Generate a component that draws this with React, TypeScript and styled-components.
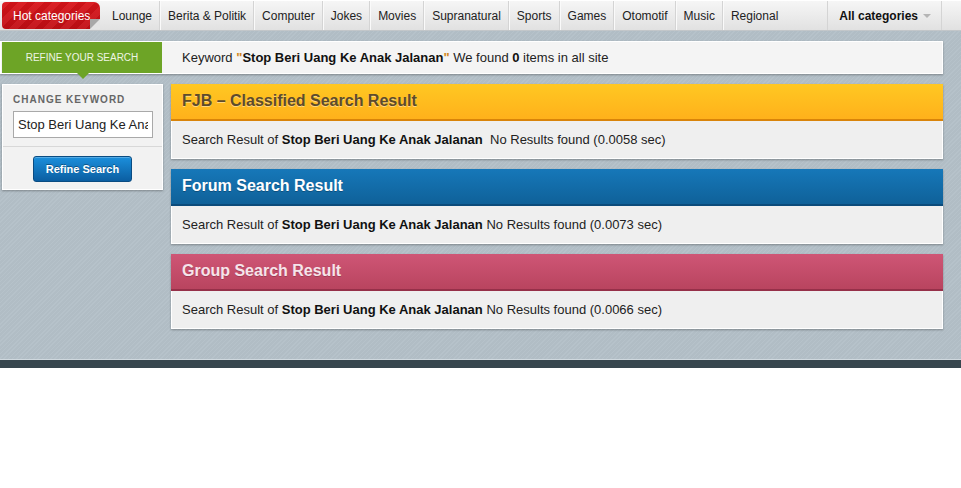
import React from "react"
import styled, { createGlobalStyle } from "styled-components"

const GlobalStyle = createGlobalStyle`
  html, body {
    margin: 0;
    padding: 0;
    background: #ffffff;
    font-family: "Liberation Sans", Arial, sans-serif;
  }
`

const categories = [
  "Lounge",
  "Berita & Politik",
  "Computer",
  "Jokes",
  "Movies",
  "Supranatural",
  "Sports",
  "Games",
  "Otomotif",
  "Music",
  "Regional",
]

type Tone = "yellow" | "blue" | "pink"

const tones = {
  yellow: {
    top: "#ffc722",
    bottom: "#ffb11b",
    edge: "#d98409",
    text: "#5d4b2c",
    shadow: "rgba(255,255,255,0.45)",
  },
  blue: {
    top: "#1677b8",
    bottom: "#0f6199",
    edge: "#0b4b7b",
    text: "#ffffff",
    shadow: "rgba(0,0,0,0.25)",
  },
  pink: {
    top: "#ce5575",
    bottom: "#b9445f",
    edge: "#963049",
    text: "#f6e4ea",
    shadow: "rgba(0,0,0,0.2)",
  },
}

const results: { title: string; tone: Tone; time: string }[] = [
  { title: "FJB \u2013 Classified Search Result", tone: "yellow", time: "0.0058" },
  { title: "Forum Search Result", tone: "blue", time: "0.0073" },
  { title: "Group Search Result", tone: "pink", time: "0.0066" },
]

const keyword = "Stop Beri Uang Ke Anak Jalanan"

const Page = styled.div`
  width: 961px;
`

const NavBar = styled.nav`
  display: flex;
  align-items: stretch;
  height: 29px;
  border-top: 1px solid #ffffff;
  border-bottom: 1px solid #c2c6c9;
  background: linear-gradient(#f6f6f6, #e1e1e1);
  font-size: 12px;
  color: #222;
`

const HotTag = styled.div`
  position: relative;
  display: flex;
  align-items: center;
  margin: 1px 4px 0 2px;
  padding: 0 9px 0 11px;
  height: 27px;
  width: 78px;
  border-radius: 4px 6px 2px 4px;
  background: repeating-linear-gradient(
      135deg,
      rgba(255, 255, 255, 0.05) 0 6px,
      rgba(0, 0, 0, 0.05) 6px 12px
    ),
    linear-gradient(#d9141a, #c10f15);
  color: #ffffff;
  white-space: nowrap;

  &::after {
    content: "";
    position: absolute;
    right: 0;
    bottom: 0;
    border-style: solid;
    border-width: 0 0 10px 10px;
    border-color: transparent transparent #e4e4e4 #a8a8a8;
  }
`

const NavItem = styled.a<{ $first?: boolean }>`
  display: flex;
  align-items: center;
  padding: 0 7px 0 8px;
  border-left: ${({ $first }) => ($first ? "none" : "1px solid #d4d4d4")};
  box-shadow: ${({ $first }) => ($first ? "none" : "inset 1px 0 0 #fafafa")};
  color: #222;
  text-decoration: none;
  white-space: nowrap;
`

const AllCategories = styled.div`
  display: flex;
  align-items: center;
  gap: 5px;
  margin-left: auto;
  margin-right: 19px;
  padding: 0 10px 0 11px;
  border-left: 1px solid #d4d4d4;
  border-right: 1px solid #d4d4d4;
  font-weight: bold;
  color: #111;
  white-space: nowrap;

  &::after {
    content: "";
    border-style: solid;
    border-width: 4px 4px 0 4px;
    border-color: #b5b5b5 transparent transparent transparent;
    margin-top: 1px;
  }
`

const Body = styled.main`
  padding: 10px 18px 30px 0;
  background: repeating-linear-gradient(
    135deg,
    #b6c2ca 0 1px,
    #b1bdc5 1px 3px
  );
`

const RefineBar = styled.div`
  display: flex;
  align-items: stretch;
  height: 31px;
  border: 1px solid #ffffff;
  background: #f4f4f4;
  box-shadow: 0 1px 2px rgba(0, 0, 0, 0.3);
  font-size: 13px;
  color: #222;
`

const RefineLabel = styled.div`
  position: relative;
  display: flex;
  align-items: center;
  justify-content: center;
  width: 160px;
  margin-left: 1px;
  background: #6da426;
  color: #eef4e4;
  font-size: 10px;
  text-transform: uppercase;

  &::after {
    content: "";
    position: absolute;
    left: 75px;
    bottom: -6px;
    border-style: solid;
    border-width: 6px 6px 0 6px;
    border-color: #6da426 transparent transparent transparent;
  }
`

const KeywordLine = styled.div`
  padding-left: 20px;
  line-height: 31px;
  white-space: pre;

  b {
    color: #111;
  }
`

const Quote = styled.span`
  color: #d2871c;
  font-weight: bold;
`

const Columns = styled.div`
  display: flex;
  align-items: flex-start;
  gap: 8px;
  margin-top: 10px;
`

const Sidebar = styled.aside`
  margin-left: 2px;
  width: 159px;
  border: 1px solid #ffffff;
  background: #f2f2f2;
  box-shadow: 0 1px 2px rgba(0, 0, 0, 0.3);
`

const SideSection = styled.div<{ $center?: boolean }>`
  display: flex;
  flex-direction: column;
  align-items: ${({ $center }) => ($center ? "center" : "stretch")};
  padding: ${({ $center }) => ($center ? "9px 10px 7px" : "9px 10px 8px")};
  border-top: ${({ $center }) => ($center ? "1px solid #d8d8d8" : "none")};
`

const SideTitle = styled.div`
  font-size: 10px;
  font-weight: bold;
  letter-spacing: 1px;
  color: #666;
  margin-bottom: 6px;
`

const KeywordInput = styled.input`
  box-sizing: border-box;
  width: 140px;
  height: 27px;
  padding: 0 4px;
  border: 1px solid #a9a9a9;
  background: #ffffff;
  font-family: "Liberation Sans", Arial, sans-serif;
  font-size: 13px;
  color: #222;
  outline: none;
`

const BlueButton = styled.button`
  width: 99px;
  height: 26px;
  border: 1px solid #0a4c82;
  border-radius: 3px;
  background: linear-gradient(#1b8fdc, #0b5ea1);
  box-shadow: inset 0 1px 0 rgba(255, 255, 255, 0.25);
  color: #ffffff;
  font-family: "Liberation Sans", Arial, sans-serif;
  font-size: 11px;
  font-weight: bold;
  text-shadow: 0 -1px 0 rgba(0, 0, 0, 0.35);
  cursor: pointer;
`

const ResultList = styled.section`
  flex: 1;
  display: flex;
  flex-direction: column;
  gap: 10px;
`

const ResultCard = styled.div`
  border: 1px solid #ffffff;
  border-top: none;
  background: #efefef;
  box-shadow: 0 1px 2px rgba(0, 0, 0, 0.3);
`

const ResultHeader = styled.h2<{ $tone: Tone }>`
  box-sizing: border-box;
  display: flex;
  align-items: center;
  margin: 0 -1px;
  height: 37px;
  padding: 0 11px 3px;
  border-top: 1px solid ${({ $tone }) => tones[$tone].top};
  border-bottom: 2px solid ${({ $tone }) => tones[$tone].edge};
  background: linear-gradient(
    ${({ $tone }) => tones[$tone].top},
    ${({ $tone }) => tones[$tone].bottom}
  );
  color: ${({ $tone }) => tones[$tone].text};
  font-size: 16px;
  font-weight: bold;
  text-shadow: 0 1px 0 ${({ $tone }) => tones[$tone].shadow};
`

const ResultBody = styled.p`
  margin: 0;
  padding: 0 10px;
  line-height: 37px;
  font-size: 13px;
  color: #222;
  white-space: pre;

  b {
    color: #111;
  }
`

const Footer = styled.footer`
  height: 8px;
  border-top: 1px solid #cfd8de;
  background: #37464e;
`

const App = () => (
  <Page>
    <GlobalStyle />
    <NavBar>
      <HotTag>Hot categories</HotTag>
      {categories.map((name, i) => (
        <NavItem key={name} $first={i === 0} href="#">
          {name}
        </NavItem>
      ))}
      <AllCategories>All categories</AllCategories>
    </NavBar>
    <Body>
      <RefineBar>
        <RefineLabel>Refine your search</RefineLabel>
        <KeywordLine>
          Keyword <Quote>"</Quote>
          <b>{keyword}</b>
          <Quote>"</Quote> We found <b>0</b> items in all site
        </KeywordLine>
      </RefineBar>
      <Columns>
        <Sidebar>
          <SideSection>
            <SideTitle>CHANGE KEYWORD</SideTitle>
            <KeywordInput defaultValue={keyword} />
          </SideSection>
          <SideSection $center>
            <BlueButton>Refine Search</BlueButton>
          </SideSection>
        </Sidebar>
        <ResultList>
          {results.map((r) => (
            <ResultCard key={r.title}>
              <ResultHeader $tone={r.tone}>{r.title}</ResultHeader>
              <ResultBody>
                {"Search Result of "}
                <b>{keyword}</b>
                {(r.tone === "yellow" ? "  " : " ") +
                  `No Results found (${r.time} sec)`}
              </ResultBody>
            </ResultCard>
          ))}
        </ResultList>
      </Columns>
    </Body>
    <Footer />
  </Page>
)

export default App
